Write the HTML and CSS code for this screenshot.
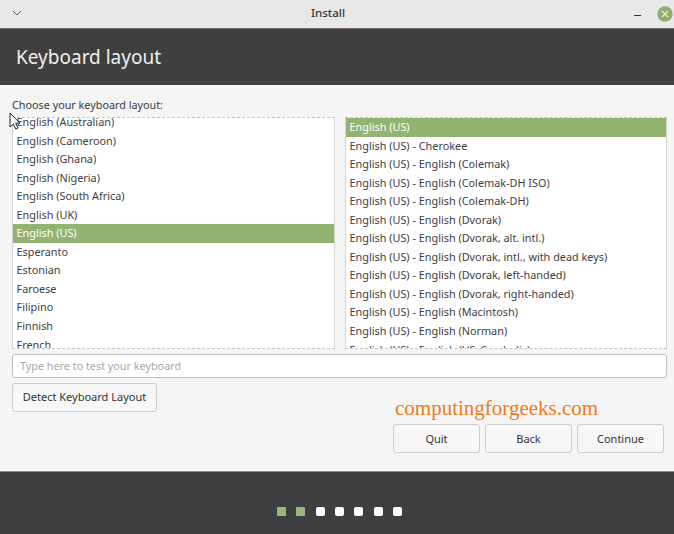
FILE: index.html
```html
<!DOCTYPE html>
<html lang="en">
<head>
<meta charset="utf-8">
<title>Install</title>
<link rel="stylesheet" href="styles.css">
</head>
<body>
<div class="window">
  <header class="titlebar">
    <svg class="tb-menu" width="12" height="8" viewBox="0 0 12 8"><path d="M2 1l4 4 4-4" fill="none" stroke="#555" stroke-width="1"/></svg>
    <span class="tb-title">Install</span>
    <div class="tb-controls">
      <span class="tb-min"></span>
      <svg class="tb-close" width="16" height="16" viewBox="0 0 16 16"><circle cx="8" cy="8" r="7.7" fill="#8fae6c"/><path d="M4.8 4.8l6.4 6.4M11.2 4.8l-6.4 6.4" stroke="#e6f2d8" stroke-width="1.2"/></svg>
    </div>
  </header>
  <div class="banner"><h1>Keyboard layout</h1></div>
  <main class="content">
    <label class="prompt">Choose your keyboard layout:</label>
    <div class="lists">
      <div class="list">
        <ul class="rows rows-scrolled">
          <li>English (Australian)</li>
          <li>English (Cameroon)</li>
          <li>English (Ghana)</li>
          <li>English (Nigeria)</li>
          <li>English (South Africa)</li>
          <li>English (UK)</li>
          <li class="sel">English (US)</li>
          <li>Esperanto</li>
          <li>Estonian</li>
          <li>Faroese</li>
          <li>Filipino</li>
          <li>Finnish</li>
          <li>French</li>
        </ul>
      </div>
      <div class="list">
        <ul class="rows">
          <li class="sel">English (US)</li>
          <li>English (US) - Cherokee</li>
          <li>English (US) - English (Colemak)</li>
          <li>English (US) - English (Colemak-DH ISO)</li>
          <li>English (US) - English (Colemak-DH)</li>
          <li>English (US) - English (Dvorak)</li>
          <li>English (US) - English (Dvorak, alt. intl.)</li>
          <li>English (US) - English (Dvorak, intl., with dead keys)</li>
          <li>English (US) - English (Dvorak, left-handed)</li>
          <li>English (US) - English (Dvorak, right-handed)</li>
          <li>English (US) - English (Macintosh)</li>
          <li>English (US) - English (Norman)</li>
          <li>English (US) - English (US, Symbolic)</li>
        </ul>
      </div>
    </div>
    <input class="test" type="text" placeholder="Type here to test your keyboard">
    <div class="detect-row"><button class="btn btn-detect">Detect Keyboard Layout</button></div>
    <div class="nav-col">
      <div class="mark">computingforgeeks.com</div>
      <div class="nav">
        <button class="btn btn-nav">Quit</button>
        <button class="btn btn-nav">Back</button>
        <button class="btn btn-nav">Continue</button>
      </div>
    </div>
  </main>
  <footer class="footer">
    <span class="dot on"></span><span class="dot on"></span><span class="dot"></span><span class="dot"></span><span class="dot"></span><span class="dot"></span><span class="dot"></span>
  </footer>
  <svg class="cursor" width="14" height="19" viewBox="0 0 14 19"><path d="M1 1v14l3.4-3 2.4 5 2.2-1-2.3-4.8H11z" fill="#fff" stroke="#222" stroke-width="1"/></svg>
</div>
</body>
</html>
```
FILE: styles.css
```css
* { box-sizing: border-box; }
html, body { margin: 0; padding: 0; }
body { width: 674px; height: 534px; overflow: hidden; font-family: "Noto Sans", "Open Sans", sans-serif; color: #3d3d3d; }
.window { position: relative; width: 674px; height: 534px; display: flex; flex-direction: column; background: #f5f5f5; }
.titlebar { height: 28px; flex: none; background: #e8e8e8; display: flex; align-items: center; justify-content: space-between; padding: 0 1px 0 11px; position: relative; }
.tb-menu { display: block; }
.tb-title { position: absolute; left: 0; right: 18px; top: 5px; text-align: center; font-size: 11.5px; line-height: 16px; font-weight: 500; color: #333; }
.tb-controls { display: flex; align-items: center; gap: 16px; position: relative; }
.tb-min { width: 7px; height: 1px; background: #333; margin-top: 3px; }
.tb-close { display: block; margin-top: -1px; }
.banner { height: 57px; flex: none; background: #3f3f3f; border-top: 1px solid #6a6a6a; padding: 0 16px 1px; display: flex; align-items: center; }
.banner h1 { margin: 0; font-size: 19px; font-weight: 400; color: #f0f0f0; }
.content { height: 386px; flex: none; padding: 13px 7px 0 12px; display: flex; flex-direction: column; }
.prompt { font-size: 10.8px; line-height: 14px; height: 14px; color: #3a3a3a; }
.lists { display: flex; gap: 10px; margin-top: 5px; height: 232px; flex: none; }
.list { flex: 1; overflow: hidden; background: #fff; border-left: 1px solid #d4d4d4; border-right: 1px solid #d4d4d4; border-top: 1px dashed #c4c4c4; border-bottom: 1px dashed #c4c4c4; }
.list:first-child { width: 323px; flex: none; }
.rows { list-style: none; margin: 0; padding: 0; }
.rows-scrolled { margin-top: -5px; }
.rows li { height: 18.55px; line-height: 18.55px; padding-left: 3.5px; font-size: 10.85px; color: #3d3d3d; white-space: nowrap; }
.rows li.sel { background: #92b372; color: #fff; }
.test { display: block; margin-top: 5px; width: 655px; height: 24px; flex: none; border: 1px solid #bfbfbf; border-radius: 3px; background: #fff; padding: 0 7px 1px; font: 10.8px "Noto Sans", sans-serif; outline: none; }
.test::placeholder { color: #a8a8a8; opacity: 1; }
.detect-row { margin-top: 5px; height: 29px; flex: none; }
.btn { font: 11px "Noto Sans", sans-serif; color: #333; background: #f7f7f7; border: 1px solid #cdcdcd; border-radius: 3px; height: 29px; padding: 0 0 2px; }
.btn-detect { width: 145px; }
.nav-col { margin-top: -20px; margin-left: 381px; width: 271px; }
.mark { font: 21px "Liberation Serif", serif; color: #ef7a22; line-height: 24px; margin-left: 2px; height: 24px; margin-top: 4px; }
.nav { display: flex; gap: 5px; margin-top: 4px; }
.btn-nav { width: 87px; padding: 0; }
.footer { flex: 1; background: #3f3f3f; border-top: 1px solid #8a8a8a; display: flex; justify-content: center; align-items: center; gap: 10.4px; padding: 17px 0 0 5px; }
.dot { width: 9px; height: 9px; border-radius: 2px; background: #fff; }
.dot.on { background: #9ab87a; border-radius: 1px; }
.cursor { position: absolute; left: 9px; top: 112px; }
```
